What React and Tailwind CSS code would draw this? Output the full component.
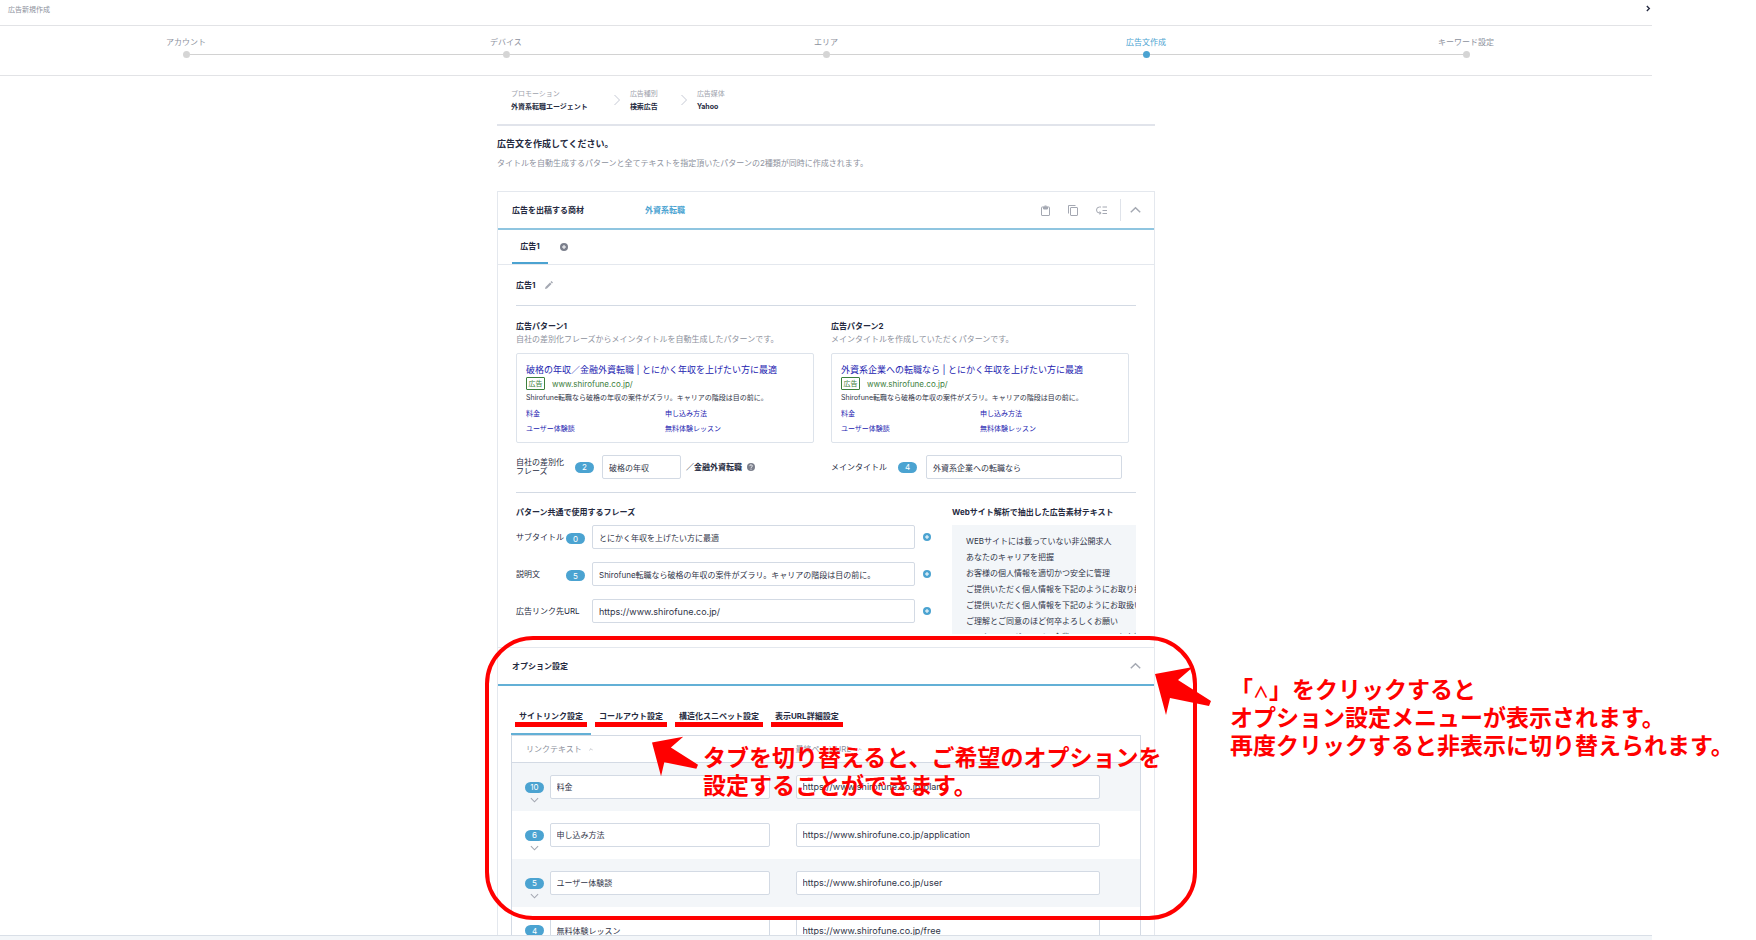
import React from "react";

const STEPS = ["アカウント", "デバイス", "エリア", "広告文作成", "キーワード設定"];

const CRUMBS = [
  ["プロモーション", "外資系転職エージェント"],
  ["広告種別", "検索広告"],
  ["広告媒体", "Yahoo"],
];

const MATERIALS = [
  "WEBサイトには載っていない非公開求人",
  "あなたのキャリアを把握",
  "お客様の個人情報を適切かつ安全に管理",
  "ご提供いただく個人情報を下記のようにお取り扱いします",
  "ご提供いただく個人情報を下記のようにお取扱いします",
  "ご理解とご同意のほど何卒よろしくお願い",
  "ハイクラス・グローバル企業へのキャリアを支援",
];

const OPTION_TABS = ["サイトリンク設定", "コールアウト設定", "構造化スニペット設定", "表示URL詳細設定"];

const SITE_LINKS = [
  [10, "料金", "https://www.shirofune.co.jp/plan"],
  [6, "申し込み方法", "https://www.shirofune.co.jp/application"],
  [5, "ユーザー体験談", "https://www.shirofune.co.jp/user"],
  [4, "無料体験レッスン", "https://www.shirofune.co.jp/free"],
];

const FIELD = "h-6 rounded-[2px] border border-[#d3dae4] bg-white px-[6px] text-[#2f3447] outline-none";
const INPUT = FIELD + " text-[8px]";
const URL_INPUT = FIELD + " text-[9px]";

function Badge({ children }) {
  return (
    <span className="flex h-[11px] w-[19px] shrink-0 items-center justify-center rounded-full bg-[#4ba3d1] text-[8px] leading-none text-white">
      {children}
    </span>
  );
}

function Chevron({ className, points = "1,8 7,2 13,8" }) {
  return (
    <svg viewBox="0 0 14 10" className={className} fill="none" stroke="currentColor" strokeWidth="1.8" aria-hidden="true">
      <polyline points={points} />
    </svg>
  );
}

function PlusDot({ className }) {
  return (
    <svg viewBox="0 0 16 16" className={className} aria-hidden="true">
      <circle cx="8" cy="8" r="8" fill="currentColor" />
      <path d="M8 4v8M4 8h8" stroke="#fff" strokeWidth="2" />
    </svg>
  );
}

function HelpDot({ className }) {
  return (
    <svg viewBox="0 0 16 16" className={className} fill="none" aria-hidden="true">
      <circle cx="8" cy="8" r="8" fill="currentColor" />
      <path d="M5.5 6.2a2.5 2.5 0 1 1 3.6 2.2Q8 9 8 10.2M8 11.4v2" stroke="#fff" strokeWidth="1.8" />
    </svg>
  );
}

function AdPreview({ title }) {
  return (
    <div className="mt-[7px] h-[90px] rounded-[2px] border border-[#dde3eb] px-[9px] pt-2">
      <a href="#ad" className="block h-[15px] text-[9px] leading-[15px] text-[#2222b0]">{title}</a>
      <div className="flex h-[13px] items-center gap-[7px] text-[8px] leading-none text-[#3c803c]">
        <span className="flex h-[13px] w-[19px] items-center justify-center rounded-[1px] border border-[#3c803c] text-[7px]">広告</span>
        <span>www.shirofune.co.jp/</span>
      </div>
      <p className="h-4 text-[7px] leading-4 text-[#2f3447]">Shirofune転職なら破格の年収の案件がズラリ。キャリアの階段は目の前に。</p>
      <div className="grid grid-cols-2 text-[7px] leading-[15px] text-[#2222b0]">
        <a href="#price">料金</a>
        <a href="#apply">申し込み方法</a>
        <a href="#user">ユーザー体験談</a>
        <a href="#free">無料体験レッスン</a>
      </div>
    </div>
  );
}

function PhraseRow({ id, label, count, value, inputClass = INPUT }) {
  return (
    <div className="flex h-6 items-center">
      <label htmlFor={id} className="w-[50px] shrink-0 whitespace-nowrap text-[8px]">{label}</label>
      <span className="w-[26px] shrink-0 pt-[3px]">{count !== undefined && <Badge>{count}</Badge>}</span>
      <input id={id} defaultValue={value} className={inputClass + " min-w-0 flex-1"} />
      <button aria-label={label + "を追加"} className="ml-2 text-[#4ba3d1]"><PlusDot className="h-2 w-2" /></button>
    </div>
  );
}

function Arrow({ className }) {
  return (
    <svg viewBox="0 0 56 48" className={className} fill="#f00" aria-hidden="true">
      <path d="M0 7L38 0L23 13L56 34L54 39L15 31L11 48Z" />
    </svg>
  );
}

function Annotations() {
  return (
    <div className="pointer-events-none text-[23px] font-bold leading-7 text-[#f00]">
      <div className="absolute -left-[13px] -right-[43px] -top-3 h-[284px] rounded-[48px] border-4 border-[#f00]" />
      <Arrow className="absolute left-[657px] top-[19px] h-12 w-14" />
      <p className="absolute left-[732px] top-[28px] whitespace-nowrap">
        「<span className="text-[16px] leading-none">∧</span>」をクリックすると<br />
        オプション設定メニューが表示されます。<br />
        再度クリックすると非表示に切り替えられます。
      </p>
      <Arrow className="absolute left-[154px] top-[88px] h-[41px] w-[46px]" />
      <p className="absolute left-[205px] top-[96px] whitespace-nowrap">
        タブを切り替えると、ご希望のオプションを<br />
        設定することができます。
      </p>
    </div>
  );
}

function OptionSection() {
  return (
    <section className="relative border-t border-[#e4e8ee]">
      <div className="flex h-[38px] items-center justify-between border-b-2 border-[#63b0d6] pl-[14px] pr-[13px]">
        <h2 className="text-[8px] font-bold">オプション設定</h2>
        <button aria-label="オプション設定を閉じる" className="text-[#a4a8b2]"><Chevron className="h-2 w-[11px]" /></button>
      </div>
      <div className="px-[13px] pt-6">
        <div role="tablist" className="flex">
          {OPTION_TABS.map((tab, i) => (
            <button
              key={tab}
              role="tab"
              aria-selected={i === 0}
              className={"flex h-[25px] flex-col border-b-2 px-2 text-[8px] font-bold leading-3 " + (i === 0 ? "border-[#63b0d6]" : "border-transparent")}
            >
              {tab}
              <span className="-mx-1 h-[5px] self-stretch bg-[#f00]" />
            </button>
          ))}
        </div>
        <table className="w-full border-collapse border border-[#d3dae4] text-left text-[8px]">
          <thead>
            <tr className="h-[27px] border-b border-[#d3dae4] text-[#8d919d]">
              <th className="pl-[14px] font-normal" colSpan={2}>
                <span className="flex items-center gap-[7px]">リンクテキスト<Chevron className="h-[3px] w-1" /></span>
              </th>
              <th className="font-normal">
                <span className="flex items-center gap-[7px]">最終ページURL<Chevron className="h-[3px] w-1" /></span>
              </th>
            </tr>
          </thead>
          <tbody>
            {SITE_LINKS.map(([count, text, url]) => (
              <tr key={url} className="h-12 odd:bg-[#f3f6f9]">
                <td className="w-[38px] pl-[13px]">
                  <div className="flex w-[19px] flex-col items-center gap-1 pt-[11px] text-[#a4a8b2]">
                    <Badge>{count}</Badge>
                    <Chevron className="h-[6px] w-[9px]" points="1,2 7,8 13,2" />
                  </div>
                </td>
                <td className="w-[246px] pr-[26px]">
                  <input aria-label="リンクテキスト" defaultValue={text} className={INPUT + " w-full"} />
                </td>
                <td className="pr-10">
                  <input aria-label="最終ページURL" defaultValue={url} className={URL_INPUT + " w-full"} />
                </td>
              </tr>
            ))}
          </tbody>
        </table>
      </div>
      <Annotations />
    </section>
  );
}

export default function App() {
  return (
    <div className="flex h-screen flex-col overflow-hidden bg-white font-['Inter','Noto_Sans_CJK_JP',sans-serif] text-[#252a40]">
      <main className="min-h-0 flex-1 overflow-hidden pr-26">
        <header className="flex h-[26px] items-start justify-between border-b border-[#e2e3e6] pl-2 pr-[1px] pt-[5px] text-[7px] leading-[10px] text-[#8d919d]">
          <h1>広告新規作成</h1>
          <button aria-label="閉じる" className="text-[#252a40]">
            <svg viewBox="0 0 6 8" className="h-[7px] w-[5px]" fill="none" stroke="currentColor" strokeWidth="1.6"><path d="M1 1l3 3-3 3" /></svg>
          </button>
        </header>

        <ol className="grid h-[50px] grid-cols-5 border-b border-[#e2e3e6] px-[26px] pt-[10px] text-center text-[8px] leading-3">
          {STEPS.map((step, i) => (
            <li key={step} className={i === 3 ? "text-[#4ba3d1]" : "text-[#8d919d]"}>
              {step}
              <div className="flex h-3 items-center">
                <span className={"h-px flex-1 " + (i === 0 ? "" : "bg-[#d2d2d2]")} />
                <span className={"h-[7px] w-[7px] rounded-full " + (i === 3 ? "bg-[#4ba3d1]" : "bg-[#d5d5d5]")} />
                <span className={"h-px flex-1 " + (i === 4 ? "" : "bg-[#d2d2d2]")} />
              </div>
            </li>
          ))}
        </ol>

        <div className="mx-auto w-[658px]">
          <nav className="flex h-[50px] items-center border-b-2 border-[#e1e4eb] pl-[14px]">
            {CRUMBS.map(([label, value], i) => (
              <React.Fragment key={label}>
                {i > 0 && (
                  <svg viewBox="0 0 6 12" className={"mr-[10px] h-3 w-[6px] text-[#c5c9d4] " + (i === 1 ? "ml-[26px]" : "ml-[23px]")} fill="none" stroke="currentColor" aria-hidden="true">
                    <path d="M0.5 1l5 5-5 5" />
                  </svg>
                )}
                <div className="text-[7px] leading-[13px]">
                  <p className="text-[#a0a3ad]">{label}</p>
                  <p className="font-bold">{value}</p>
                </div>
              </React.Fragment>
            ))}
          </nav>

          <h2 className="mt-[10px] text-[9px] font-bold leading-4">広告文を作成してください。</h2>
          <p className="mt-[3px] text-[8px] leading-4 text-[#8d919d]">
            タイトルを自動生成するパターンと全てテキストを指定頂いたパターンの2種類が同時に作成されます。
          </p>

          <div className="mt-5 border border-[#e4e8ee]">
            <div className="flex h-[38px] items-center border-b-2 border-[#8fc5e0] pl-[14px] pr-[13px] text-[8px] font-bold">
              <span className="w-[133px]">広告を出稿する商材</span>
              <span className="flex-1 text-[#4ba3d1]">外資系転職</span>
              <div className="flex items-center text-[#a4a8b2]">
                <button aria-label="貼り付け" className="mr-[18px]">
                  <svg viewBox="0 0 18 22" className="h-[11px] w-[9px]" fill="none" stroke="currentColor" strokeWidth="2">
                    <rect x="1" y="4" width="16" height="17" rx="1" />
                    <path d="M5 4h8v4H5zM7 2h4" fill="currentColor" />
                  </svg>
                </button>
                <button aria-label="複製" className="mr-[18px]">
                  <svg viewBox="0 0 20 22" className="h-[11px] w-[10px]" fill="none" stroke="currentColor" strokeWidth="2">
                    <rect x="5" y="5" width="14" height="16" rx="1" />
                    <path d="M1 17V1h14" />
                  </svg>
                </button>
                <button aria-label="並べ替え" className="mr-[13px]">
                  <svg viewBox="0 0 22 18" className="h-[9px] w-[11px]" fill="none" stroke="currentColor" strokeWidth="2">
                    <path d="M10 2H7a5.5 5.5 0 0 0 0 12h2M13 2h9M13 9h9M13 15h9" />
                    <path d="M7 10l4 4-4 4z" fill="currentColor" stroke="none" />
                  </svg>
                </button>
                <span className="mr-[9px] h-[22px] w-px bg-[#dfe3ea]" />
                <button aria-label="閉じる"><Chevron className="h-2 w-[11px]" /></button>
              </div>
            </div>

            <div role="tablist" className="flex h-[35px] items-stretch gap-3 border-b border-[#e4e8ee] pl-[14px]">
              <button role="tab" aria-selected="true" className="w-9 border-b-2 border-[#4ba3d1] text-[8px] font-bold">広告1</button>
              <button aria-label="広告を追加" className="text-[#7b7f8c]"><PlusDot className="h-2 w-2" /></button>
            </div>

            <div className="px-[18px]">
              <div className="flex h-[41px] items-center gap-[10px] border-b border-[#d3dae4] text-[8px] font-bold">
                広告1
                <button aria-label="名前を編集" className="text-[#a4a8b2]">
                  <svg viewBox="0 0 16 16" className="h-2 w-2" fill="currentColor"><path d="M0 16l1-4L10 3l3 3-9 9zM11 2l2-2 3 3-2 2z" /></svg>
                </button>
              </div>

              <div className="grid grid-cols-2 gap-[17px] pr-[7px] pt-[14px]">
                <div>
                  <h3 className="text-[8px] font-bold leading-[13px]">広告パターン1</h3>
                  <p className="text-[8px] leading-[13px] text-[#8d919d]">自社の差別化フレーズからメインタイトルを自動生成したパターンです。</p>
                  <AdPreview title="破格の年収／金融外資転職 | とにかく年収を上げたい方に最適" />
                  <div className="mt-3 flex h-6 items-center text-[8px]">
                    <label htmlFor="phrase" className="w-[59px] leading-[9px]">自社の差別化<br />フレーズ</label>
                    <Badge>2</Badge>
                    <input id="phrase" defaultValue="破格の年収" className={INPUT + " ml-2 w-[79px]"} />
                    <span className="ml-[5px] font-bold">／金融外資転職</span>
                    <button aria-label="ヘルプ" className="ml-[5px] text-[#7b7f8c]"><HelpDot className="h-2 w-2" /></button>
                  </div>
                </div>
                <div>
                  <h3 className="text-[8px] font-bold leading-[13px]">広告パターン2</h3>
                  <p className="text-[8px] leading-[13px] text-[#8d919d]">メインタイトルを作成していただくパターンです。</p>
                  <AdPreview title="外資系企業への転職なら | とにかく年収を上げたい方に最適" />
                  <div className="mt-3 flex h-6 items-center pr-[7px] text-[8px]">
                    <label htmlFor="main-title" className="w-[67px]">メインタイトル</label>
                    <Badge>4</Badge>
                    <input id="main-title" defaultValue="外資系企業への転職なら" className={INPUT + " ml-[9px] min-w-0 flex-1"} />
                  </div>
                </div>
              </div>

              <div className="mt-[13px] flex gap-[21px] border-t border-[#d3dae4] pb-[13px] pt-3">
                <div className="min-w-0 flex-1">
                  <h3 className="text-[8px] font-bold leading-[14px]">パターン共通で使用するフレーズ</h3>
                  <div className="mt-[6px] flex flex-col gap-[13px]">
                    <PhraseRow id="subtitle" label="サブタイトル" count={0} value="とにかく年収を上げたい方に最適" />
                    <PhraseRow id="description" label="説明文" count={5} value="Shirofune転職なら破格の年収の案件がズラリ。キャリアの階段は目の前に。" />
                    <PhraseRow id="url" label="広告リンク先URL" value="https://www.shirofune.co.jp/" inputClass={URL_INPUT} />
                  </div>
                </div>
                <div className="w-[184px]">
                  <h3 className="text-[8px] font-bold leading-[14px]">Webサイト解析で抽出した広告素材テキスト</h3>
                  <ul className="mt-[6px] h-[109px] overflow-hidden whitespace-nowrap bg-[#f3f6f9] pl-[14px] pt-2 text-[8px] leading-4 text-[#2f3447]">
                    {MATERIALS.map((m) => <li key={m}>{m}</li>)}
                  </ul>
                </div>
              </div>
            </div>

            <OptionSection />
          </div>
        </div>
      </main>
      <footer className="mr-26 h-[5px] shrink-0 border-t border-[#d9dfe7] bg-[#f3f6f9]" />
    </div>
  );
}
